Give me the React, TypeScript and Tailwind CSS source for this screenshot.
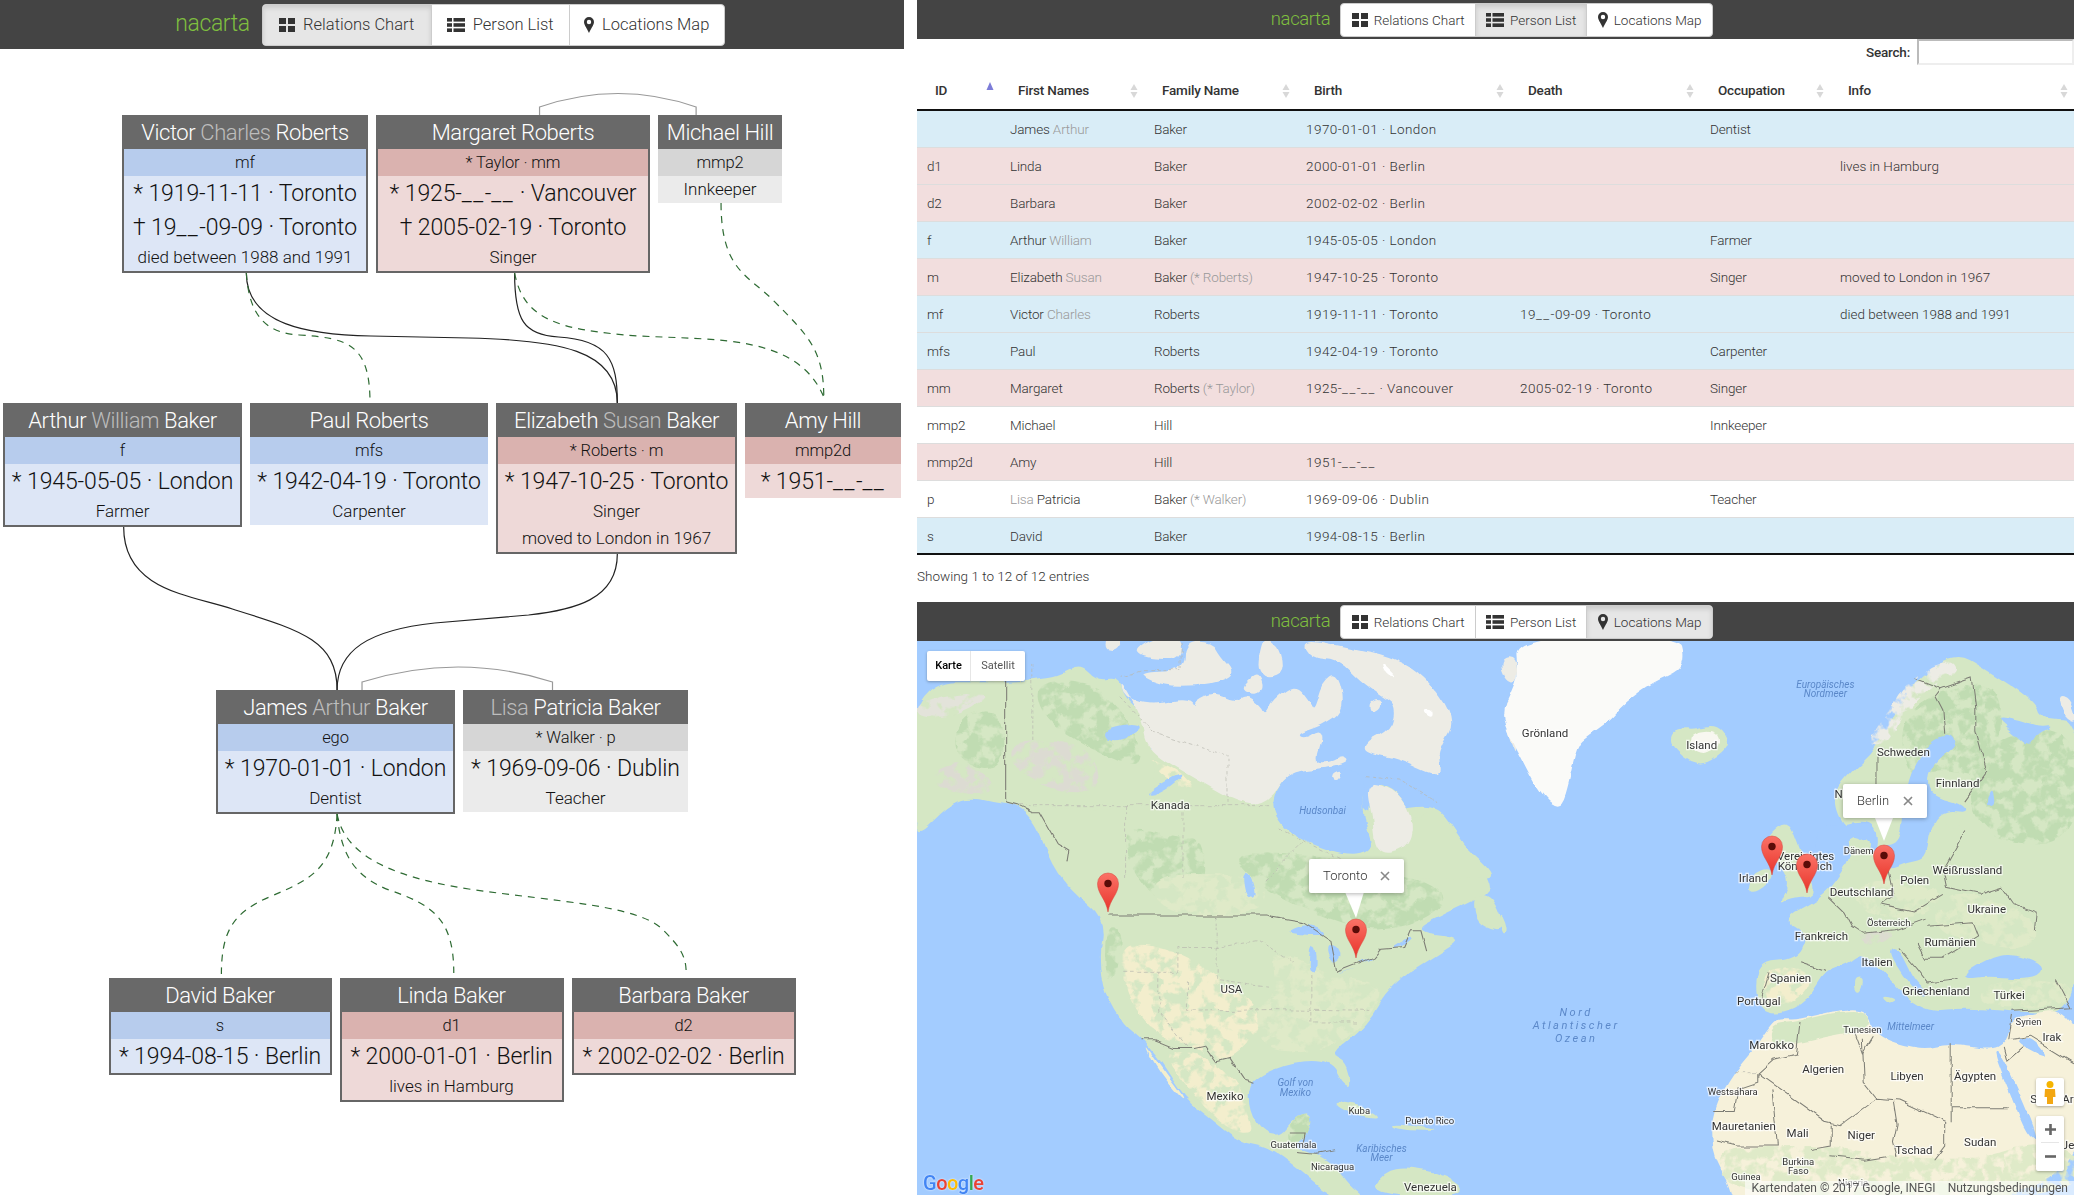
import React from "react";

const FONT = "font-['Roboto','Liberation_Sans',sans-serif]";

function ThLarge() {
  return (
    <svg width="16" height="14" viewBox="0 0 16 14" className="shrink-0" fill="#333">
      <rect x="0" y="0" width="7" height="6" /><rect x="9" y="0" width="7" height="6" />
      <rect x="0" y="8" width="7" height="6" /><rect x="9" y="8" width="7" height="6" />
    </svg>
  );
}
function ThList() {
  return (
    <svg width="18" height="14" viewBox="0 0 18 14" className="shrink-0" fill="#333">
      <rect x="0" y="0" width="5" height="3.6" /><rect x="6.5" y="0" width="11.5" height="3.6" />
      <rect x="0" y="5.2" width="5" height="3.6" /><rect x="6.5" y="5.2" width="11.5" height="3.6" />
      <rect x="0" y="10.4" width="5" height="3.6" /><rect x="6.5" y="10.4" width="11.5" height="3.6" />
    </svg>
  );
}
function Marker() {
  return (
    <svg width="10" height="16" viewBox="0 0 10 16" className="shrink-0" fill="#333">
      <path fillRule="evenodd" d="M5 0a5 5 0 0 1 5 5c0 3-3.6 7.5-5 11C3.6 12.500 0 8 0 5a5 5 0 0 1 5-5zm0 2.800a2.200 2.200 0 1 0 0 4.400 2.200 2.200 0 0 0 0-4.400z" />
    </svg>
  );
}

function Nav({ active, big }: { active: number; big?: boolean }) {
  const items = [
    { t: "Relations Chart", i: <ThLarge />, w: big ? "w-[168px]" : "w-[134px]" },
    { t: "Person List", i: <ThList />, w: big ? "w-[138px]" : "w-[111px]" },
    { t: "Locations Map", i: <Marker />, w: big ? "w-[155px]" : "w-[126px]" },
  ];
  return (
    <div className={`flex items-center justify-center bg-[#444444] ${big ? "h-[49px] pr-[4px]" : "h-[39px] pr-[7px]"}`}>
      <span className={`text-[#7fbf3f] tracking-[-0.4px] font-light ${big ? "text-[23px] mr-[12px]" : "text-[18.500px] mr-[10px]"}`}>nacarta</span>
      <div className={`flex overflow-hidden rounded-[4px] border border-[#cccccc] bg-white text-[#333333] font-light ${big ? "h-[42px] text-[16.500px]" : "h-[34px] text-[13.500px]"}`}>
        {items.map((it, i) => (
          <div
            key={it.t}
            className={`flex items-center justify-center ${big ? "gap-[8px]" : "gap-[6px]"} ${it.w} ${i > 0 ? "border-l border-[#cccccc]" : ""} ${active === i ? "bg-[#e6e6e6] shadow-[inset_0_3px_5px_rgba(0,0,0,0.125)]" : ""}`}
          >
            {it.i}
            <span className="whitespace-nowrap pt-[1px]">{it.t}</span>
          </div>
        ))}
      </div>
    </div>
  );
}

function Us({ s }: { s: string }) {
  return (
    <>
      {s.split(/(__)/).map((part, i) =>
        part === "__" ? <span key={i} className="tracking-[1.500px]">__</span> : <span key={i}>{part}</span>
      )}
    </>
  );
}

type Tone = "m" | "f" | "u";
const roleBg: Record<Tone, string> = { m: "bg-[#b7cced]", f: "bg-[#dab2af]", u: "bg-[#d6d6d6]" };
const bodyBg: Record<Tone, string> = { m: "bg-[#dde6f6]", f: "bg-[#eed9d8]", u: "bg-[#ebebeb]" };

function Person({ w, name, role, tone, dates, info, framed }: { w: string; name: React.ReactNode; role: React.ReactNode; tone: Tone; dates: string[]; info?: string[]; framed?: boolean }) {
  return (
    <div className={`${w} shrink-0 text-center text-[#111111] font-light`}>
      <div className="h-[34px] bg-[#696969] text-white text-[22px] leading-[36px] tracking-[-0.4px] whitespace-nowrap">{name}</div>
      <div className={`${framed ? "border-x-2 border-b-2 border-[#666666]" : ""} ${bodyBg[tone]}`}>
        <div className={`h-[27px] leading-[28px] text-[16.500px] tracking-[-0.1px] ${roleBg[tone]}`}>{role}</div>
        {dates.map((d) => (
          <div key={d} className="h-[34px] leading-[36px] text-[23px] tracking-[-0.1px] whitespace-nowrap"><Us s={d} /></div>
        ))}
        {info?.map((d) => (
          <div key={d} className="h-[27px] leading-[27px] text-[17px] whitespace-nowrap">{d}</div>
        ))}
      </div>
    </div>
  );
}

const G = ({ children }: { children: React.ReactNode }) => <span className="text-[#bdbdbd]">{children}</span>;

function Connectors() {
  const solid = [
    "M247,273 C247,325 310,335 372,336 L470,338 C560,340 619,350 619,403",
    "M516,273 C516,320 525,335 560,337 C610,340 619,360 619,403",
    "M124,527 C124,590 190,595 233,609 C300,630 338,640 338,690",
    "M619,554 C619,600 575,610 530,615 L436,623 C370,630 338,650 338,690",
  ];
  const dashed = [
    "M247,273 C250,320 270,333 300,335 C350,338 371,345 371,403",
    "M516,273 C525,320 560,330 640,336 C720,340 800,335 826,397",
    "M723,203 C723,270 750,275 775,300 C810,335 826,350 826,397",
    "M338,814 C335,870 310,880 270,897 C235,912 222,930 222,974",
    "M338,814 C342,860 360,878 390,890 C435,905 455,920 455,973",
    "M338,814 C345,850 380,875 470,889 C560,902 640,905 665,930 C680,945 688,955 688,972",
  ];
  return (
    <svg className="absolute left-0 top-0 pointer-events-none" width="908" height="1196" fill="none">
      <g transform="scale(0.9973 1)">
        {solid.map((d) => <path key={d} d={d} stroke="#222" strokeWidth="1.200" />)}
        {dashed.map((d) => <path key={d} d={d} stroke="#2e6b33" strokeWidth="1.200" strokeDasharray="7 6" />)}
        <path d="M541,115 V107 Q620,80 698,107 V115" stroke="#999" strokeWidth="1.200" />
        <path d="M363,690 V682 Q460,652 554,682 V690" stroke="#999" strokeWidth="1.200" />
      </g>
    </svg>
  );
}

function Chart() {
  return (
    <div className="relative w-[904px] shrink-0 h-[1196px] bg-white">
      <Nav active={0} big />
      <div className="flex justify-center gap-2 mt-[66px] items-start">
        <Person framed w="w-[246px]" tone="m" role="mf" name={<>Victor <G>Charles</G> Roberts</>} dates={["* 1919-11-11 · Toronto", "† 19__-09-09 · Toronto"]} info={["died between 1988 and 1991"]} />
        <Person framed w="w-[274px]" tone="f" role="* Taylor · mm" name="Margaret Roberts" dates={["* 1925-__-__ · Vancouver", "† 2005-02-19 · Toronto"]} info={["Singer"]} />
        <Person w="w-[124px]" tone="u" role="mmp2" name="Michael Hill" dates={[]} info={["Innkeeper"]} />
      </div>
      <div className="flex justify-center gap-2 mt-[130px] items-start">
        <Person framed w="w-[239px]" tone="m" role="f" name={<>Arthur <G>William</G> Baker</>} dates={["* 1945-05-05 · London"]} info={["Farmer"]} />
        <Person w="w-[238px]" tone="m" role="mfs" name="Paul Roberts" dates={["* 1942-04-19 · Toronto"]} info={["Carpenter"]} />
        <Person framed w="w-[241px]" tone="f" role="* Roberts · m" name={<>Elizabeth <G>Susan</G> Baker</>} dates={["* 1947-10-25 · Toronto"]} info={["Singer", "moved to London in 1967"]} />
        <Person w="w-[156px]" tone="f" role="mmp2d" name="Amy Hill" dates={["* 1951-__-__"]} />
      </div>
      <div className="flex justify-center gap-2 mt-[136px] items-start">
        <Person framed w="w-[239px]" tone="m" role="ego" name={<>James <G>Arthur</G> Baker</>} dates={["* 1970-01-01 · London"]} info={["Dentist"]} />
        <Person w="w-[225px]" tone="u" role="* Walker · p" name={<><G>Lisa</G> Patricia Baker</>} dates={["* 1969-09-06 · Dublin"]} info={["Teacher"]} />
      </div>
      <div className="flex justify-center gap-2 mt-[164px] items-start">
        <Person framed w="w-[223px]" tone="m" role="s" name="David Baker" dates={["* 1994-08-15 · Berlin"]} />
        <Person framed w="w-[224px]" tone="f" role="d1" name="Linda Baker" dates={["* 2000-01-01 · Berlin"]} info={["lives in Hamburg"]} />
        <Person framed w="w-[224px]" tone="f" role="d2" name="Barbara Baker" dates={["* 2002-02-02 · Berlin"]} />
      </div>
      <Connectors />
    </div>
  );
}

const H = ({ children }: { children: React.ReactNode }) => <span className="text-[#999999]">{children}</span>;
type Row = { bg: string; c: React.ReactNode[] };
const B = "bg-[#d9edf7]", P = "bg-[#f2dede]", W = "bg-white";
const rows: Row[] = [
  { bg: B, c: ["", <>James <H>Arthur</H></>, "Baker", "1970-01-01 · London", "", "Dentist", ""] },
  { bg: P, c: ["d1", "Linda", "Baker", "2000-01-01 · Berlin", "", "", "lives in Hamburg"] },
  { bg: P, c: ["d2", "Barbara", "Baker", "2002-02-02 · Berlin", "", "", ""] },
  { bg: B, c: ["f", <>Arthur <H>William</H></>, "Baker", "1945-05-05 · London", "", "Farmer", ""] },
  { bg: P, c: ["m", <>Elizabeth <H>Susan</H></>, <>Baker <H>(* Roberts)</H></>, "1947-10-25 · Toronto", "", "Singer", "moved to London in 1967"] },
  { bg: B, c: ["mf", <>Victor <H>Charles</H></>, "Roberts", "1919-11-11 · Toronto", <Us s="19__-09-09 · Toronto" />, "", "died between 1988 and 1991"] },
  { bg: B, c: ["mfs", "Paul", "Roberts", "1942-04-19 · Toronto", "", "Carpenter", ""] },
  { bg: P, c: ["mm", "Margaret", <>Roberts <H>(* Taylor)</H></>, <Us s="1925-__-__ · Vancouver" />, "2005-02-19 · Toronto", "Singer", ""] },
  { bg: W, c: ["mmp2", "Michael", "Hill", "", "", "Innkeeper", ""] },
  { bg: P, c: ["mmp2d", "Amy", "Hill", <Us s="1951-__-__" />, "", "", ""] },
  { bg: W, c: ["p", <><H>Lisa</H> Patricia</>, <>Baker <H>(* Walker)</H></>, "1969-09-06 · Dublin", "", "Teacher", ""] },
  { bg: B, c: ["s", "David", "Baker", "1994-08-15 · Berlin", "", "", ""] },
];
const heads = ["ID", "First Names", "Family Name", "Birth", "Death", "Occupation", "Info"];
const colW = ["w-[83px]", "w-[144px]", "w-[152px]", "w-[214px]", "w-[190px]", "w-[130px]", "w-[244px]"];

function Sort({ first }: { first?: boolean }) {
  return (
    <svg width="8" height="18" viewBox="0 0 8 18" className="absolute right-[6px] top-[8px]">
      {first ? <path d="M4 0 L7.500 8 H0.500 Z" fill="#7c7cd8" /> : (
        <>
          <path d="M4 2 L7.500 8 H0.500 Z" fill="#d8d8d8" />
          <path d="M4 16 L7.500 10 H0.500 Z" fill="#d8d8d8" />
        </>
      )}
    </svg>
  );
}

function PersonTable() {
  return (
    <div>
      <div className="flex justify-end items-center h-[26px] text-[13.500px] font-medium text-[#333333] tracking-[-0.2px]">
        <span className="mr-[7px]">Search:</span>
        <div className="w-[157px] h-[26px] border-2 border-[#eeeeee] border-t-[#bbbbbb] border-l-[#bbbbbb] bg-white" />
      </div>
      <table className="w-[1157px] table-fixed border-collapse mt-[9px] text-[13.500px] font-light text-[#333333] tracking-[-0.15px]">
        <thead>
          <tr className="h-[36px] border-b-2 border-[#111111]">
            {heads.map((h, i) => (
              <th key={h} className={`${colW[i]} relative text-left pl-[18px] pb-[3px] font-medium tracking-[-0.2px]`}>
                {h}
                <Sort first={i === 0} />
              </th>
            ))}
          </tr>
        </thead>
        <tbody>
          {rows.map((r, i) => (
            <tr key={i} className={`h-[37px] ${r.bg} ${i ? "border-t border-[#dddddd]" : ""}`}>
              {r.c.map((c, j) => (
                <td key={j} className={`pl-[10px] pt-[1px] whitespace-nowrap ${j === 3 || j === 4 ? "tracking-[0.45px]" : j === 6 ? "tracking-[0px]" : ""}`}>{c}</td>
              ))}
            </tr>
          ))}
        </tbody>
      </table>
      <div className="border-t-2 border-[#111111] -mt-[1px] h-[49px] pb-[4px] flex items-center text-[13.500px] font-light text-[#333333] tracking-[0px]">Showing 1 to 12 of 12 entries</div>
    </div>
  );
}

/* ---------- map drawing ---------- */
function smooth(pts: number[][]) {
  const n = pts.length;
  const mid = (a: number[], b: number[]) => [(a[0] + b[0]) / 2, (a[1] + b[1]) / 2];
  const s = mid(pts[n - 1], pts[0]);
  let d = `M${s[0]},${s[1]}`;
  for (let i = 0; i < n; i++) {
    const m = mid(pts[i], pts[(i + 1) % n]);
    d += ` Q${pts[i][0]},${pts[i][1]} ${m[0]},${m[1]}`;
  }
  return d + "Z";
}
const p = (s: string) => s.trim().split(/\s+/).map((q) => q.split(",").map(Number));
const Land = ({ d, f }: { d: string; f: string }) => <path d={smooth(p(d))} fill={f} />;
const Line = ({ d, dash }: { d: string; dash?: boolean }) => (
  <polyline points={d} fill="none" stroke={dash ? "#b9b9b0" : "#7d7d75"} strokeWidth={dash ? 2 : 2.8} strokeDasharray={dash ? "10 7" : undefined} />
);

const GREEN = "#d5e7c4", LIGHT = "#edece5", TAN = "#f3eecd", SEA = "#a3ccff", PALE = "#dfeac8", FOREST = "#c0dcb2", SAND = "#f6f1da";

function NorthAmerica() {
  return (
    <>
      <g transform="translate(-7 0) scale(0.3827 0.3546)">
        <Land f={GREEN} d="18,500 250,300 600,300 900,350 1000,400 1130,400 1190,420 1180,500 1310,470 1380,470 1450,580 1515,680 1510,720 1400,775 1310,825 1450,840 1380,890 1290,950 1240,1000 1210,1060 1170,1110 1100,1170 1140,1190 1155,1265 1130,1255 1100,1190 1000,1190 900,1235 880,1290 900,1370 960,1410 1000,1350 1050,1335 1040,1400 1000,1430 1060,1450 1110,1485 1150,1545 1190,1575 1100,1575 1020,1500 930,1430 860,1420 780,1350 720,1300 650,1180 600,1120 560,1090 510,1000 495,900 510,790 430,720 370,640 330,520 280,470 250,465 170,430 100,470 18,560" />
        <Land f={SEA} d="610,1130 640,1200 715,1305 680,1260 640,1195 604,1130" />
        <Land f={TAN} d="610,1135 650,1200 720,1300 705,1295 640,1205" />
        <g filter="url(#speck)">
          <Land f={FOREST} d="560,520 700,560 760,560 780,700 660,760 570,640" />
          <Land f={FOREST} d="860,600 1040,610 1180,630 1400,700 1380,780 1220,830 1100,790 960,730 860,640" />
          <Land f={PALE} d="620,660 930,660 930,780 660,780" />
          <Land f={TAN} d="550,850 700,880 800,950 920,1040 900,1120 820,1200 740,1145 640,1120 560,1000" />
          <Land f={PALE} d="940,860 1100,950 1200,960 1240,1000 1160,1120 1040,1170 920,1160 900,1050 960,1000" />
          <Land f={TAN} d="650,1150 790,1180 870,1270 880,1340 900,1400 820,1380 720,1260" />
          <Land f={FOREST} d="1000,1350 1050,1335 1040,1400 1000,1430 980,1400" />
          <Land f={FOREST} d="510,800 560,830 540,950 510,960" />
        </g>
        <Land f={GREEN} d="1470,720 1520,720 1560,830 1480,800" />
        <Land f={GREEN} d="1100,1305 1170,1310 1240,1355 1150,1340" />
        <Land f={GREEN} d="1250,1370 1300,1370 1400,1388 1280,1385" />
        <Land f={GREEN} d="1200,1568 1240,1500 1300,1490 1400,1510 1470,1575" />
        <Land f={SEA} d="980,825 1050,800 1095,835 1030,835" />
        <Land f={SEA} d="1045,865 1060,870 1060,945 1040,940" />
        <Land f={SEA} d="1085,860 1115,860 1130,900 1100,920" />
        <Land f={SEA} d="1115,945 1180,925 1120,945" />
        <Land f={SEA} d="1160,915 1210,900 1200,910" />
        <Land f={SEA} d="870,660 890,660 905,730 880,730" />
        <Land f={SEA} d="1240,880 1320,830 1300,860" />
      </g>
      {/* northern Canada, drawn in its own grid */}
      <g transform="scale(0.3827 0.3333)">
        <Land f={GREEN} d="-20,130 230,130 310,120 370,110 430,75 470,125 530,115 540,170 600,230 620,400 620,520 230,500 130,470 60,520 -20,590" />
        <Land f={LIGHT} d="530,115 540,170 610,200 720,175 730,230 720,190 780,160 830,190 860,165 900,200 910,225 930,180 990,130 1030,190 1040,215 1060,130 1100,100 1120,210 1060,260 990,285 1010,300 1050,270 1060,300 1040,370 1080,370 1110,350 1130,370 1060,390 970,400 920,490 850,500 700,400 600,330 590,240" />
        <g filter="url(#speck)">
          <Land f={FOREST} d="300,130 450,120 550,230 600,400 450,330 330,240" />
          <Land f={FOREST} d="100,240 220,200 230,400 100,370" />
          <Land f="#dcdbd2" d="240,300 440,310 490,440 400,470 260,400" />
          <Land f="#dcdbd2" d="30,400 140,360 220,470 60,460" />
          <Land f="#e3e3da" d="0,180 210,150 120,230 0,240" />
          <Land f={TAN} d="590,350 680,390 740,460 660,430" />
        </g>
        <Land f={GREEN} d="1180,420 1260,460 1300,550 1360,490 1420,610 1500,690 1500,720 1180,720" />
        <Land f={LIGHT} d="1170,420 1260,460 1300,550 1280,630 1200,650 1190,540" />
        <Land f={SEA} d="920,490 970,400 1040,390 1130,380 1170,420 1165,540 1195,630 1130,650 1040,620 960,570" />
        <Land f={SEA} d="480,270 570,250 590,270 510,315" />
        <Land f={SEA} d="590,470 680,405 700,410 630,470" />
        <Land f={LIGHT} d="585,100 700,95 700,8 770,8 790,50 830,100 800,125 730,140 650,140 600,120" />
        <Land f={LIGHT} d="570,30 620,-5 690,-5 690,60 620,60 580,50" />
        <Land f={LIGHT} d="490,-5 540,-5 520,35 490,30" />
        <Land f={LIGHT} d="860,130 890,100 905,150 880,165 850,150" />
        <Land f={LIGHT} d="895,60 910,-5 950,30 960,100 920,120 895,100" />
        <Land f={LIGHT} d="1000,-5 1150,30 1230,50 1320,100 1410,240 1370,320 1360,360 1370,410 1330,400 1260,360 1170,340 1170,310 1240,270 1250,200 1210,170 1160,130 1100,60 1030,60" />
        <Land f={LIGHT} d="1180,190 1210,175 1215,210 1185,225" />
        <Land f={LIGHT} d="1085,405 1110,395 1105,420 1085,425" />
        <Land f="#ffffff" d="1215,70 1235,90 1255,115 1225,105" />
        <Land f="#ffffff" d="1325,210 1350,215 1350,240 1330,230" />
        <Land f={LIGHT} d="1520,60 1568,50 1568,130 1540,125" />
        <Land f={LIGHT} d="1530,190 1568,165 1568,360 1550,300" />
        <Line dash d="300,75 300,310" />
        <Line dash d="690,-5 690,95 590,95 535,115" />
        <Line dash d="530,170 620,280 810,350 810,500" />
        <Line dash d="950,570 1090,650 1110,660" />
        <Line dash d="1170,410 1260,420 1360,490" />
        <Line dash d="250,500 920,500" />
        <Line dash d="545,500 545,720" />
        <Line dash d="695,520 695,720" />
      </g>
      <g transform="translate(-7 0) scale(0.3827 0.3546)">
        <Line d="250,118 250,462 280,470 320,490 340,490 385,575 415,595 410,630" />
        <Line d="518,778 930,778 945,785 1030,800 1100,850 1115,940 1210,900 1230,875 1290,870 1310,820 1335,820 1350,880" />
        <Line d="605,1130 640,1130 690,1152 740,1152 770,1145 800,1190 835,1180 875,1245 900,1253" />
        <Line d="990,1390 1035,1390 1030,1420" />
        <Line d="1010,1445 1060,1450 1110,1440" />
        <Line dash d="930,680 1030,570" />
        <Line dash d="560,940 700,940 700,870 800,870 800,960 940,980" />
        <Line dash d="650,940 650,1050 725,1150" />
        <Line dash d="725,960 725,1050 940,1045 1200,1050" />
        <Line dash d="800,780 800,870 910,850 1000,910" />
        <Line dash d="1050,950 1050,1080 1170,1080" />
      </g>
    </>
  );
}

function World() {
  return (
    <>
      <g transform="translate(583 0) scale(0.366 0.3546)">
        <Land f="#fafaf8" d="40,-5 490,-5 505,50 490,90 420,120 340,180 300,230 240,275 210,300 190,400 170,470 140,470 100,420 60,340 30,280 5,210 30,150 50,100" />
        <Land f={GREEN} d="470,260 500,250 530,255 590,240 625,280 620,310 560,355 520,345 490,320 465,290" />
        <Land f="#f8f7f0" d="520,265 590,255 600,300 560,330 520,310" />
        <Land f={GREEN} d="915,470 915,442 938,395 1029,310 1102,169 1147,103 1247,38 1320,80 1466,179 1475,226 1600,226 1600,1060 1400,1050 1260,1040 1180,1050 1110,1010 1060,950 990,880 950,915 890,930 840,1020 760,1060 700,1040 700,910 810,905 840,830 770,790 880,730 920,680 945,640 960,600 950,530 930,510" />
        <g filter="url(#speck)">
          <Land f={LIGHT} d="1000,300 1060,200 1130,100 1230,50 1260,90 1180,130 1100,220 1060,300" />
          <Land f={FOREST} d="1090,200 1300,110 1380,170 1340,400 1200,360 1110,400" />
          <Land f={FOREST} d="1280,300 1580,220 1580,600 1290,560" />
          <Land f={PALE} d="1210,700 1460,770 1460,880 1300,860 1180,820" />
          <Land f={TAN} d="720,920 870,940 810,1030 720,1030" />
          <Land f="#dcdcd0" d="970,830 1080,820 1060,860 990,860" />
          <Land f={PALE} d="1330,960 1560,960 1560,1040 1300,1040" />
          <Land f={PALE} d="950,680 1200,680 1200,780 1000,790" />
        </g>
        <Land f={SEA} d="1280,930 1380,880 1490,920 1460,960 1330,950 1270,960" />
        <Land f={SEA} d="1060,880 1090,870 1130,960 1170,1000 1150,1010 1100,950" />
        <Land f={GREEN} d="720,570 765,520 795,520 810,560 840,640 860,710 850,725 790,730 760,750 790,690 770,640 735,610" />
        <Land f={GREEN} d="690,660 740,640 745,680 700,715 680,710" />
        <Land f={GREEN} d="970,960 995,960 985,1000 970,995" />
        <Land f={GREEN} d="1040,1005 1085,1015 1060,1030" />
        <Land f={GREEN} d="0,770 15,800 20,830 5,835" />
        <Land f={SAND} d="760,1070 810,1075 900,1050 1000,1040 1020,1120 1150,1160 1230,1140 1340,1160 1385,1140 1400,1060 1600,1040 1600,1600 640,1600 620,1530 575,1440 580,1330 640,1220 700,1150 740,1090" />
        <Land f={GREEN} d="740,1085 810,1080 900,1055 1000,1045 1010,1100 900,1120 820,1140 740,1150" />
        <g filter="url(#speck)">
          <Land f={PALE} d="575,1440 760,1430 900,1430 1080,1460 1300,1470 1450,1420 1580,1440 1580,1580 640,1580" />
        </g>
        <Land f={SEA} d="1345,1160 1370,1170 1475,1420 1440,1400 1400,1300" />
        <Land f={SEA} d="1400,1130 1450,1120 1500,1180 1460,1170" />
        <Land f={SAND} d="1520,1140 1600,1100 1600,1240 1550,1200" />
      </g>
      {/* Baltic and White Sea, drawn in their own grid */}
      <g transform="translate(843 0) scale(0.3333)">
        <Land f={SEA} d="570,285 590,320 540,360 505,400 510,470 610,495 625,525 550,515 510,570 500,660 440,670 385,695 345,665 352,620 420,615 430,520 445,420 480,350 520,300" />
        <Land f={SEA} d="225,560 340,540 355,620 335,660 300,590 260,600 240,690 180,770 150,700 170,570" />
        <Land f={GREEN} d="270,610 330,590 330,640 285,670 268,650" />
        <Land f={GREEN} d="550,525 610,525 605,560 550,570" />
        <Land f={SEA} d="700,230 760,280 810,325 830,285 885,260 830,265 780,245" />
        <Land f={SEA} d="690,455 700,450 705,500 680,495" />
        <Land f={LIGHT} d="890,170 930,180 950,250 910,230" />
      </g>
      <g transform="translate(583 0) scale(0.366 0.3546)">
        <Line d="707,1225 890,1360 930,1370 1030,1295 1090,1300 1215,1360 1215,1430 1185,1470" />
        <Line d="1230,1140 1230,1360" />
        <Line d="1230,1322 1390,1322" />
        <Line d="740,1270 755,1430 650,1430 590,1415" />
        <Line d="580,1330 640,1330 650,1270 707,1250 707,1225" />
        <Line dash d="640,1220 707,1220" />
        <Line d="707,1225 750,1185 810,1170 820,1080" />
        <Line d="990,1130 995,1250 1030,1295" />
        <Line d="965,1100 990,1170 1020,1120" />
        <Line d="1075,1305 1085,1370 1075,1420 1085,1460" />
        <Line d="905,1370 905,1430 850,1440" />
        <Line d="900,1460 1000,1470 1060,1460" />
        <Line d="1400,1060 1390,1130 1450,1120 1568,1195" />
        <Line d="1375,1150 1385,1190 1430,1150" />
        <Line d="1030,335 1030,410" />
        <Line d="1205,140 1190,160 1210,200 1215,270" />
        <Line d="1130,110 1205,140 1290,110 1300,190 1300,260 1330,375 1270,460" />
        <Line d="1270,540 1210,650 1220,700 1310,720 1370,700 1400,745 1465,770 1460,820" />
        <Line d="1060,650 1075,725 1040,750 1130,770 1210,720" />
        <Line d="900,730 940,770 960,810 990,830 1080,820 1160,790" />
        <Line d="820,910 890,935" />
        <Line d="735,940 710,1030" />
        <Line d="1170,810 1290,800 1305,840 1210,900 1160,900 1140,860" />
        <Line d="1090,870 1140,930 1170,970 1250,960" />
        <Line d="1400,1050 1560,1040 1520,960" />
      </g>
    </>
  );
}

type Lb = [string, number, number, string?];
const z5 = (x: number) => x * 0.3827 - 7;
const z6 = (x: number) => x * 0.366 + 583;
const y0 = (y: number) => y * 0.3546 + 4;

const labels5: Lb[] = [["Kanada", 680, 468], ["USA", 840, 987], ["Mexiko", 823, 1289], ["Kuba", 1174, 1328, "s"], ["Puerto Rico", 1358, 1357, "s"], ["Guatemala", 1002, 1425, "s"], ["Nicaragua", 1104, 1485, "s"], ["Venezuela", 1360, 1545]];
const seas5: Lb[] = [["Hudsonbai", 1078, 483], ["Golf von", 1007, 1250], ["Mexiko", 1007, 1278], ["Karibisches", 1232, 1436], ["Meer", 1232, 1461]];
const labels6: Lb[] = [["Grönland", 123, 265], ["Island", 551, 298], ["Schweden", 1102, 318], ["Finnland", 1250, 405], ["N", 925, 437], ["Dänem", 980, 596, "s"], ["Vereinigtes", 835, 612], ["Königreich", 833, 640], ["Irland", 692, 674], ["Weißrussland", 1277, 652], ["Polen", 1133, 680], ["Deutschland", 988, 714], ["Ukraine", 1330, 762], ["Österreich", 1062, 798, "s"], ["Frankreich", 878, 838], ["Rumänien", 1230, 855], ["Italien", 1030, 911], ["Spanien", 794, 956], ["Griechenland", 1191, 992], ["Türkei", 1391, 1004], ["Portugal", 707, 1021], ["Tunesien", 990, 1100, "s"], ["Syrien", 1444, 1078, "s"], ["Irak", 1508, 1122], ["Marokko", 742, 1145], ["Algerien", 883, 1213], ["Libyen", 1112, 1233], ["Ägypten", 1298, 1233], ["Westsahara", 636, 1275, "s"], ["Mauretanien", 666, 1374], ["Mali", 813, 1393], ["Niger", 987, 1400], ["Tschad", 1131, 1441], ["Sudan", 1312, 1419], ["Burkina", 815, 1473, "s"], ["Faso", 815, 1498, "s"], ["Guinea", 672, 1515, "s"], ["Nigeria", 965, 1530, "s"], ["S", 1458, 1296], ["Ar", 1552, 1296], ["Je", 1552, 1428]];
const seas6: Lb[] = [["Europäisches", 889, 127], ["Nordmeer", 889, 153], ["Mittelmeer", 1122, 1092]];

function Pin({ x, y }: { x: number; y: number }) {
  return (
    <g transform={`translate(${x} ${y})`}>
      <path d="M0,0 C-2,-13 -10.500,-18 -10.500,-28.500 A10.500,10.500 0 1 1 10.500,-28.500 C10.500,-18 2,-13 0,0Z" fill="url(#pin)" stroke="#d9423a" strokeWidth="0.500" />
      <circle cx="0" cy="-28.500" r="3.700" fill="#5b0c08" />
    </g>
  );
}

function MapArt() {
  return (
    <svg className="block" width="1157" height="554" viewBox="0 2 1157 554">
      <defs>
        <linearGradient id="pin" x1="0" y1="0" x2="0" y2="1">
          <stop offset="0" stopColor="#fb7267" />
          <stop offset="1" stopColor="#e8342a" />
        </linearGradient>
        <filter id="coast" filterUnits="userSpaceOnUse" x="0" y="0" width="1157" height="556" colorInterpolationFilters="sRGB">
          <feTurbulence type="fractalNoise" baseFrequency="0.045" numOctaves="3" seed="4" result="n" />
          <feDisplacementMap in="SourceGraphic" in2="n" scale="7" xChannelSelector="R" yChannelSelector="G" result="d" />
          <feGaussianBlur in="d" stdDeviation="0.35" />
        </filter>
        <filter id="speck" colorInterpolationFilters="sRGB">
          <feTurbulence type="fractalNoise" baseFrequency="0.03" numOctaves="3" seed="9" result="n" />
          <feColorMatrix in="n" type="matrix" values="0 0 0 0 0  0 0 0 0 0  0 0 0 0 0  6 0 0 0 -2.300" result="m" />
          <feComposite in="SourceGraphic" in2="m" operator="in" />
        </filter>
      </defs>
      <rect y="0" width="1157" height="556" fill={SEA} />
      <g filter="url(#coast)">
        <NorthAmerica />
        <World />
      </g>
      <g fontFamily="Roboto, sans-serif" textAnchor="middle" fill="#333" stroke="#ffffff" strokeWidth="2.500" strokeOpacity="0.7" className="[paint-order:stroke]">
        {labels5.map(([t, x, y, s]) => <text key={t + x} x={z5(x)} y={y0(y)} fontSize={s ? 9.5 : 11.5}>{t}</text>)}
        {labels6.map(([t, x, y, s]) => <text key={t + x} x={z6(x)} y={y0(y)} fontSize={s ? 9.5 : 11.5}>{t}</text>)}
      </g>
      <g fontFamily="Roboto, sans-serif" textAnchor="middle" fill="#5b88c9" fontStyle="italic" fontSize="10">
        {seas5.map(([t, x, y]) => <text key={t + x} x={z5(x)} y={y0(y)}>{t}</text>)}
        {seas6.map(([t, x, y]) => <text key={t + x} x={z6(x)} y={y0(y)}>{t}</text>)}
        <text x={z6(208)} y={y0(1052)} letterSpacing="2.500" fontSize="11">Nord</text>
        <text x={z6(208)} y={y0(1089)} letterSpacing="2.500" fontSize="11">Atlantischer</text>
        <text x={z6(208)} y={y0(1126)} letterSpacing="2.500" fontSize="11">Ozean</text>
      </g>
      <Pin x={191} y={273} />
      <Pin x={439} y={319} />
      <Pin x={855} y={236} />
      <Pin x={890} y={254} />
      <Pin x={967} y={245} />
      <path d="M428,253 L439,279 L447,253Z" fill="#fff" />
      <path d="M958,179 L967,202 L976,179Z" fill="#fff" />
    </svg>
  );
}

function Info({ text, pos }: { text: string; pos: string }) {
  return (
    <div className={`absolute ${pos} h-[34px] bg-white rounded-[2px] shadow-[0_1px_4px_rgba(0,0,0,0.3)] flex items-center justify-between px-[14px] text-[13px] font-light text-[#333333]`}>
      <span>{text}</span>
      <svg width="10" height="10" viewBox="0 0 10 10"><path d="M1 1 L9 9 M9 1 L1 9" stroke="#888" strokeWidth="1.600" /></svg>
    </div>
  );
}

function MapPanel() {
  return (
    <div className="relative h-[554px] overflow-hidden">
      <MapArt />
      <div className="absolute left-[10px] top-[10px] w-[98px] h-[30px] flex items-center bg-white rounded-[2px] shadow-[0_1px_3px_rgba(0,0,0,0.3)] text-[11px] font-['Roboto',sans-serif]">
        <span className="w-[44px] h-full flex items-center justify-center border-r border-[#e6e6e6] font-medium text-black">Karte</span>
        <span className="flex-1 text-center text-[#565656]">Satellit</span>
      </div>
      <Info text="Toronto" pos="left-[392px] top-[218px] w-[95px]" />
      <Info text="Berlin" pos="left-[926px] top-[143px] w-[84px]" />
      <div className="absolute left-[1119px] top-[437px] w-[28px] h-[28px] bg-white rounded-[2px] shadow-[0_1px_3px_rgba(0,0,0,0.3)] flex items-center justify-center">
        <svg width="12" height="23" viewBox="0 0 12 23">
          <circle cx="6" cy="3.500" r="3.500" fill="#f5b400" />
          <path d="M1,8 H11 L11.500,16 H9 V23 H3 V16 H0.500Z" fill="#f3a712" />
        </svg>
      </div>
      <div className="absolute left-[1119px] top-[475px] w-[28px] h-[55px] bg-white rounded-[2px] shadow-[0_1px_3px_rgba(0,0,0,0.3)] flex flex-col items-center">
        <div className="h-[27px] w-[18px] flex items-center justify-center border-b border-[#e6e6e6]">
          <svg width="11" height="11" viewBox="0 0 11 11"><path d="M0,5.500 H11 M5.500,0 V11" stroke="#666" strokeWidth="2.600" /></svg>
        </div>
        <div className="h-[27px] w-[18px] flex items-center justify-center">
          <svg width="11" height="3" viewBox="0 0 11 3"><path d="M0,1.500 H11" stroke="#666" strokeWidth="2.600" /></svg>
        </div>
      </div>
      <div className="absolute left-[6px] top-[527px] text-[20px] font-medium tracking-[-0.5px] font-['Roboto',sans-serif] [text-shadow:0_0_2px_#fff]">
        <span className="text-[#4285f4]">G</span><span className="text-[#ea4335]">o</span><span className="text-[#fbbc05]">o</span><span className="text-[#4285f4]">g</span><span className="text-[#34a853]">l</span><span className="text-[#ea4335]">e</span>
      </div>
      <div className="absolute right-0 bottom-0 h-[14px] pl-[6px] pr-[6px] flex gap-[12px] bg-white/60 text-[12px] leading-[14px] text-[#555555] font-['Roboto',sans-serif] whitespace-nowrap">
        <span>Kartendaten © 2017 Google, INEGI</span>
        <span>Nutzungsbedingungen</span>
      </div>
    </div>
  );
}

export default function App() {
  return (
    <div className={`flex w-[2074px] h-[1196px] overflow-hidden bg-white ${FONT}`}>
      <Chart />
      <div className="ml-[13px] w-[1157px] shrink-0">
        <Nav active={1} />
        <PersonTable />
        <Nav active={2} />
        <MapPanel />
      </div>
    </div>
  );
}
